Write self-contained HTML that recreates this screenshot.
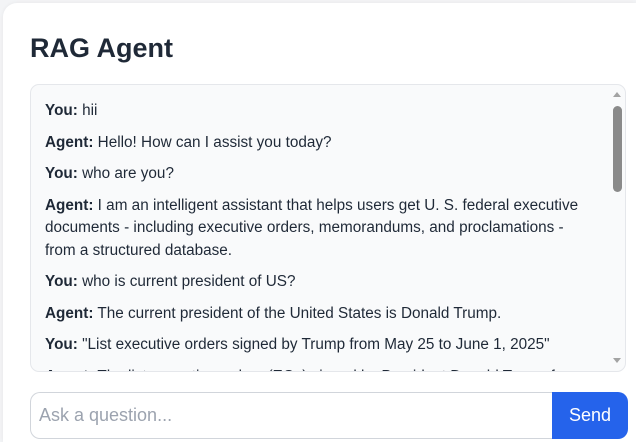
<!DOCTYPE html>
<html><head><style>
html,body{margin:0;padding:0;width:636px;height:442px;overflow:hidden;background:#f3f4f6;font-family:"Segoe UI","Liberation Sans",sans-serif;}
.card{position:absolute;left:3px;top:3px;width:633px;height:439px;background:#fff;border-radius:14px 0 0 0;box-shadow:0 0 4px rgba(0,0,0,.06);}
h1{position:absolute;left:30px;top:33px;margin:0;font-size:27px;font-weight:bold;color:#1f2937;}
.chat{position:absolute;left:30px;top:84px;width:596px;height:288px;box-sizing:border-box;border:1px solid #e5e7eb;border-radius:9px;background:#f9fafb;overflow:hidden;}
.msgs{position:absolute;left:14px;top:15px;width:548px;font-size:15.3px;line-height:22.5px;color:#1f2937;}
.msgs p{margin:0 0 9px 0;}
.sb{position:absolute;right:0;top:0;width:16px;height:100%;}
.thumb{position:absolute;left:4px;top:21px;width:9px;height:86px;background:#8a8a8a;border-radius:5px;}
.up,.dn{position:absolute;left:4px;width:0;height:0;border-left:4px solid transparent;border-right:4px solid transparent;}
.up{top:7px;border-bottom:5px solid #a3a3a3;}
.dn{bottom:8px;border-top:5px solid #a3a3a3;}
.input{position:absolute;left:30px;top:392px;width:523px;height:47px;box-sizing:border-box;border:1px solid #d1d5db;border-right:none;border-radius:10px 0 0 10px;background:#fff;font-size:18px;color:#9ca3af;padding:12px 0 0 8px;}
.btn{position:absolute;left:552px;top:392px;width:76px;height:47px;background:#2563eb;border-radius:0 10px 10px 0;color:#fff;font-size:18px;text-align:center;line-height:46px;}
</style></head><body>
<div class="card"></div>
<h1>RAG Agent</h1>
<div class="chat">
<div class="msgs">
<p><b>You:</b> hii</p>
<p><b>Agent:</b> Hello! How can I assist you today?</p>
<p><b>You:</b> who are you?</p>
<p><b>Agent:</b> I am an intelligent assistant that helps users get U. S. federal executive documents - including executive orders, memorandums, and proclamations - from a structured database.</p>
<p><b>You:</b> who is current president of US?</p>
<p><b>Agent:</b> The current president of the United States is Donald Trump.</p>
<p><b>You:</b> "List executive orders signed by Trump from May 25 to June 1, 2025"</p>
<p><b>Agent:</b> The list executive orders (EOs) signed by President Donald Trump from</p>
</div>
<div class="sb"><div class="up"></div><div class="thumb"></div><div class="dn"></div></div>
</div>
<div class="input">Ask a question...</div>
<div class="btn">Send</div>
</body></html>
